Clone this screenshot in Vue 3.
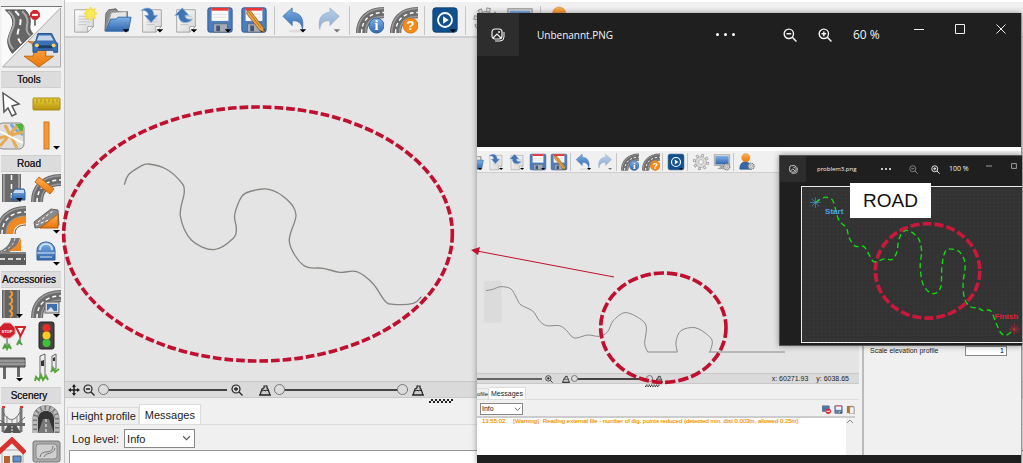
<script setup>
import { ref } from 'vue'

const toolbar = [
  ['doc', 'folder', 'import', 'export', 'save', 'saveas'],
  ['undo', 'redo'],
  ['road-info', 'road-help'],
  ['play'],
  ['gear', 'monitor'],
  ['user'],
]
const innerToolbar = [toolbar[0].slice(1), ...toolbar.slice(1)]

const sections = [
  { title: 'Tools', icons: ['cursor', 'ruler', 'map', 'bar'] },
  { title: 'Road', icons: ['road-car', 'road-cut', 'road-curve', 'ramp', 'junction', 'tunnel-blue'] },
  { title: 'Accessories', icons: ['marking', 'road-sign', 'stop', 'light', 'rail', 'posts'] },
  { title: 'Scenery', icons: ['bridge', 'tunnel', 'house', 'surface'] },
]

const level = ref('Info')
const innerLevel = ref('Info')

// Smooth curve through a list of points (Catmull-Rom converted to Bezier)
function smooth(p) {
  let d = `M${p[0]}`
  for (let i = 0; i < p.length - 1; i++) {
    const a = p[i - 1] || p[i]
    const b = p[i]
    const c = p[i + 1]
    const e = p[i + 2] || c
    d += `C${b[0] + (c[0] - a[0]) / 6},${b[1] + (c[1] - a[1]) / 6} ${c[0] - (e[0] - b[0]) / 6},${c[1] - (e[1] - b[1]) / 6} ${c}`
  }
  return d
}

const mainRoad = smooth([[193, 284], [205, 255], [240, 230], [265, 222], [318, 237], [362, 275], [373, 305], [361, 378], [394, 450], [462, 479], [520, 445], [529, 415], [524, 375], [545, 320], [575, 303], [627, 298], [680, 328], [708, 375], [688, 455], [730, 526], [790, 535], [840, 547], [890, 545], [938, 580], [975, 633], [1000, 643], [1060, 640], [1084, 620]])
const innerRoadA = smooth([[30, 62], [50, 58], [75, 50], [105, 57], [122, 85], [135, 105], [170, 123], [190, 152], [212, 167], [250, 167], [272, 182], [295, 204], [335, 195], [370, 199], [395, 185], [412, 152], [447, 128], [490, 145], [511, 170], [506, 220], [515, 246]])
const innerRoadB = smooth([[604, 246], [600, 215], [615, 182], [657, 173], [695, 195], [709, 215], [702, 245]])
const track = smooth([[140, 157], [152, 148], [170, 141], [190, 150], [200, 180], [207, 205], [218, 220], [232, 233], [240, 262], [258, 287], [283, 288], [298, 310], [314, 334], [345, 325], [368, 327], [382, 305], [390, 262], [412, 240], [445, 262], [456, 300], [452, 350], [462, 405], [490, 429], [513, 410], [517, 345], [527, 303], [545, 296], [570, 305], [586, 340], [580, 400], [585, 445], [602, 468], [625, 472], [640, 480], [662, 480], [678, 515], [692, 545], [710, 553], [733, 535]])
</script>

<template>
  <div class="app">
    <svg class="sprite" aria-hidden="true">
      <defs>
        <linearGradient id="g-blue" x1="0" y1="0" x2="0" y2="1"><stop offset="0" stop-color="#7fb0e6" /><stop offset="1" stop-color="#2f66ad" /></linearGradient>
        <linearGradient id="g-paper" x1="0" y1="0" x2="1" y2="1"><stop offset="0" stop-color="#fff" /><stop offset="1" stop-color="#d4d4d4" /></linearGradient>
        <linearGradient id="g-gold" x1="0" y1="0" x2="0" y2="1"><stop offset="0" stop-color="#e6cf3a" /><stop offset="1" stop-color="#b8930c" /></linearGradient>
        <linearGradient id="g-orange" x1="0" y1="0" x2="0" y2="1"><stop offset="0" stop-color="#ffb053" /><stop offset="1" stop-color="#e8760c" /></linearGradient>

        <symbol id="i-drop" viewBox="0 0 30 30"><path d="M20 25h7l-3.500 3.500z" fill="#000" /></symbol>
        <symbol id="i-sheet" viewBox="0 0 30 30">
          <path d="M5 4h20v18l-6 6H5z" fill="url(#g-paper)" stroke="#a4a4a4" />
          <path d="M25 22h-6v6z" fill="#fff" stroke="#a4a4a4" />
          <path d="M9 11h12M9 14h12M9 17h12M9 20h9" stroke="#c2c2c2" />
        </symbol>
        <symbol id="i-doc" viewBox="0 0 30 30">
          <use href="#i-sheet" />
          <path d="M22 1l1.500 3 3.500-1-1 3.500 3 1.500-3 2 1 3.500-3.500-1-1.500 3-2-3-3 1 1-3.500-3-2 3-1.500-1-3.500 3 1z" fill="#fbe95a" stroke="#f3d93a" />
        </symbol>
        <symbol id="i-folder" viewBox="0 0 30 30">
          <path d="M1 27L2 8l3-4 8-1 2 3h10v8z" fill="#8d8d8d" stroke="#666" />
          <path d="M4 20L8 7l16-1v10z" fill="#e6e6e6" stroke="#aaa" />
          <path d="M2 27l5-13h6l2-2h14l-3 15z" fill="url(#g-blue)" stroke="#3467a8" />
          <use href="#i-drop" />
        </symbol>
        <symbol id="i-import" viewBox="0 0 30 30">
          <use href="#i-sheet" />
          <path d="M3 5c6-5 14-3 14 5h4l-7 8-7-8h4c0-4-4-6-8-5z" fill="#3f74b6" stroke="#8fb2dc" stroke-width=".8" />
          <use href="#i-drop" />
        </symbol>
        <symbol id="i-export" viewBox="0 0 30 30">
          <use href="#i-sheet" />
          <path d="M11 2l7 8h-4c0 4 4 5 8 4-5 6-15 5-15-4H3z" fill="#3f74b6" stroke="#8fb2dc" stroke-width=".8" />
          <use href="#i-drop" />
        </symbol>
        <symbol id="i-save" viewBox="0 0 30 30">
          <rect x="2" y="2" width="26" height="26" rx="2" fill="#4c7dbd" stroke="#2d5490" />
          <path d="M6 3h18v13H6z" fill="#f9f9f9" /><path d="M6 2h18v3H6z" fill="#ee3634" />
          <path d="M8 9h14M8 12h14" stroke="#e0e0e0" />
          <path d="M8 19h15v9H8z" fill="#a5abb3" stroke="#5a6a80" /><path d="M11 21h4v6h-4z" fill="#3d5577" />
          <use href="#i-drop" />
        </symbol>
        <symbol id="i-saveas" viewBox="0 0 30 30">
          <use href="#i-save" />
          <path d="M8 5l3 0 14 18 1 5-5-2L7 8z" fill="#eba544" stroke="#83531a" stroke-width=".8" /><path d="M9 6l14 18" stroke="#b26d1b" />
        </symbol>
        <symbol id="i-undo" viewBox="0 0 30 30">
          <path d="M2 11L12 2v5c9 0 13 7 11 18-1-7-5-10-11-9v5z" fill="url(#g-blue)" stroke="#4271ac" stroke-width=".8" />
          <ellipse cx="16" cy="27" rx="8" ry="1.500" fill="#ddd" /><use href="#i-drop" />
        </symbol>
        <symbol id="i-redo" viewBox="0 0 30 30">
          <g opacity=".5"><path d="M26 11L16 2v5C7 7 3 14 5 25c1-7 5-10 11-9v5z" fill="url(#g-blue)" stroke="#4271ac" stroke-width=".8" /><use href="#i-drop" /></g>
        </symbol>
        <symbol id="i-curve" viewBox="0 0 30 30">
          <path d="M6 29C6 16 14 7 30 7" fill="none" stroke="#666" stroke-width="12" />
          <path d="M6 29C6 16 14 7 30 7" fill="none" stroke="#9a9a9a" stroke-width="10" />
          <path d="M6 29C6 16 14 7 30 7" fill="none" stroke="#6c6c6c" stroke-width="7" />
          <path d="M6 29C6 16 14 7 30 7" fill="none" stroke="#fff" stroke-width="1.500" stroke-dasharray="4 3" />
        </symbol>
        <symbol id="i-road-info" viewBox="0 0 30 30">
          <use href="#i-curve" />
          <circle cx="22" cy="21" r="8" fill="url(#g-blue)" stroke="#3264a3" />
          <text x="22" y="26" font-family="Liberation Serif, serif" font-weight="bold" font-size="15" text-anchor="middle" fill="#fff">i</text>
        </symbol>
        <symbol id="i-road-help" viewBox="0 0 30 30">
          <use href="#i-curve" />
          <circle cx="22" cy="21" r="8" fill="#f78b17" stroke="#de7206" />
          <text x="22" y="26" font-family="Liberation Sans, sans-serif" font-weight="bold" font-size="14" text-anchor="middle" fill="#fff">?</text>
        </symbol>
        <symbol id="i-play" viewBox="0 0 30 30">
          <rect x="2" y="2" width="26" height="26" rx="3" fill="#10508f" stroke="#0b3d70" />
          <circle cx="15" cy="15" r="7.500" fill="none" stroke="#fff" stroke-width="2" /><path d="M13 11v8l6-4z" fill="#fff" />
          <use href="#i-drop" />
        </symbol>
        <symbol id="i-gear" viewBox="0 0 30 30">
          <circle cx="15" cy="15" r="11" fill="none" stroke="#8d8d8d" stroke-width="5" stroke-dasharray="4.300 4.340" />
          <circle cx="15" cy="15" r="11" fill="none" stroke="#e4e4e4" stroke-width="3" stroke-dasharray="2.700 5.940" stroke-dashoffset="-.8" />
          <circle cx="15" cy="15" r="9" fill="#dcdcdc" stroke="#999" /><circle cx="15" cy="15" r="4" fill="#f4f4f4" stroke="#999" />
        </symbol>
        <symbol id="i-monitor" viewBox="0 0 30 30">
          <rect x="2" y="3" width="26" height="18" fill="#ddd" stroke="#888" /><rect x="4" y="5" width="22" height="14" fill="url(#g-blue)" />
          <path d="M11 21h7v4h3v2H8v-2h3z" fill="#aaa" />
          <circle cx="23" cy="23" r="5" fill="#ddd" stroke="#777" stroke-width="2" stroke-dasharray="2 1" /><circle cx="23" cy="23" r="2" fill="#fff" stroke="#777" />
        </symbol>
        <symbol id="i-user" viewBox="0 0 30 30">
          <path d="M3 27c0-9 4-12 9-12s10 3 10 12z" fill="#3568a8" stroke="#274f86" />
          <circle cx="13" cy="8" r="7" fill="url(#g-orange)" stroke="#d8892c" stroke-width=".6" />
          <circle cx="22" cy="22" r="5" fill="#ddd" stroke="#777" stroke-width="2" stroke-dasharray="2 1" /><circle cx="22" cy="22" r="2" fill="#fff" stroke="#777" />
        </symbol>

        <symbol id="i-cursor" viewBox="0 0 30 30"><path d="M7 4l16 11-7 2 4 8-4 2-4-8-4 4z" fill="#fff" stroke="#555" stroke-width="1.500" /></symbol>
        <symbol id="i-ruler" viewBox="0 0 30 30">
          <rect x="2" y="9" width="27" height="12" rx="1" fill="url(#g-gold)" stroke="#a98c14" /><path d="M6 10v4M10 10v3M14 10v4M18 10v3M22 10v4M26 10v3" stroke="#a0820f" stroke-width=".8" />
        </symbol>
        <symbol id="i-map" viewBox="0 0 30 30">
          <rect x="2" y="2" width="26" height="26" rx="5" fill="#dededc" stroke="#888" />
          <path d="M19 3h8v11z" fill="#53b13d" /><path d="M15 3c3 6 8 7 12 11" fill="none" stroke="#78a9e0" stroke-width="3" />
          <path d="M3 17l24-6M9 4l12 23M4 25l17-20" stroke="#e5ab57" stroke-width="3" /><path d="M3 10l24 12" stroke="#fff" stroke-width="2" />
        </symbol>
        <symbol id="i-bar" viewBox="0 0 30 30"><rect x="13" y="1" width="5" height="27" fill="#f6973c" stroke="#d67714" /><path d="M22 25h7l-3.500 3.500z" fill="#000" /></symbol>
        <symbol id="i-straight" viewBox="0 0 30 30">
          <path d="M6 1h19v28H6z" fill="#6a6a6a" /><path d="M8 1v28M23 1v28" stroke="#aaa" stroke-width="1.500" /><path d="M15.500 2v27" stroke="#fff" stroke-width="1.500" stroke-dasharray="5 4" />
        </symbol>
        <symbol id="i-road-car" viewBox="0 0 30 30">
          <use href="#i-straight" /><path d="M16 22l3-6h9l1 3v8H16z" fill="url(#g-blue)" stroke="#345f9b" /><path d="M19 17h9v3h-11z" fill="#c8dbef" /><use href="#i-drop" />
        </symbol>
        <symbol id="i-road-cut" viewBox="0 0 30 30"><use href="#i-curve" /><path d="M4 9l4-5 15 12-4 5z" fill="url(#g-orange)" stroke="#cb690d" /></symbol>
        <symbol id="i-road-curve" viewBox="0 0 30 30">
          <use href="#i-curve" /><path d="M14 29c0-8 5-14 16-14" fill="none" stroke="#f08a20" stroke-width="7" /><path d="M19 29c0-6 4-9 11-9" fill="none" stroke="#7b4a12" />
        </symbol>
        <symbol id="i-ramp" viewBox="0 0 30 30">
          <path d="M3 17L20 4l7 1 1 15-24 3z" fill="#8a8a8a" stroke="#666" /><path d="M7 17L22 6M5 20l21-8" stroke="#fff" stroke-dasharray="3 2" />
          <path d="M9 23L27 9v14z" fill="url(#g-orange)" stroke="#b85d0b" /><path d="M22 25h7l-3.500 3.500z" fill="#000" />
        </symbol>
        <symbol id="i-junction" viewBox="0 0 30 30">
          <path d="M1 15h29v13H1z" fill="#5d5d5d" /><path d="M1 15C10 12 14 7 15 1h9c-2 8-6 12-11 14z" fill="#777" /><path d="M19 1C18 8 13 12 5 15" fill="none" stroke="#ddd" stroke-dasharray="3 2" />
          <path d="M25 1v13H12C19 11 22 7 25 1z" fill="#f08a20" />
          <path d="M4 22h25" stroke="#fff" stroke-width="1.500" stroke-dasharray="5 3" /><path d="M1 16h29" stroke="#aaa" />
        </symbol>
        <symbol id="i-tunnel-blue" viewBox="0 0 30 30">
          <path d="M6 23V14c0-12 18-12 18 0v9z" fill="url(#g-blue)" stroke="#365f98" /><path d="M9 13c0-8 12-8 12 0" fill="none" stroke="#cfe0f3" stroke-width="2" /><path d="M6 16h18M9 20h12" stroke="#d8e6f5" /><path d="M22 25h7l-3.500 3.500z" fill="#000" />
        </symbol>
        <symbol id="i-marking" viewBox="0 0 30 30">
          <path d="M6 1h18v28H6z" fill="#636363" /><path d="M8 1v28M22 1v28" stroke="#aaa" />
          <path d="M14 2c3 2 3 4 0 6 3 2 3 5 0 7 3 2 3 5 0 7 3 2 3 4 0 6" fill="none" stroke="#f29a32" stroke-width="2" /><use href="#i-drop" />
        </symbol>
        <symbol id="i-road-sign" viewBox="0 0 30 30">
          <use href="#i-curve" /><rect x="14" y="13" width="14" height="11" fill="#d5d5d5" stroke="#666" /><rect x="16" y="15" width="10" height="7" fill="#3c6eb0" /><path d="M16 22l4-4 3 4z" fill="#d6e4f3" /><path d="M22 25h7l-3.500 3.500z" fill="#000" />
        </symbol>
        <symbol id="i-stop" viewBox="0 0 30 30">
          <path d="M11 15v13" stroke="#999" stroke-width="2" /><path d="M24 14v9" stroke="#999" stroke-width="2" />
          <path d="M8 2h6l5 5v6l-5 4H8l-5-4V7z" fill="#cf202b" stroke="#e88" />
          <text x="11" y="12" font-family="Liberation Sans, sans-serif" font-weight="bold" font-size="4" text-anchor="middle" fill="#fff">STOP</text>
          <path d="M20 6h9l-4.500 9z" fill="#fff" stroke="#cf202b" stroke-width="2" /><path d="M7 28l2-4 2 4 2-4 2 4M21 24l2-4 3 4" fill="none" stroke="#4fa13d" stroke-width="2" />
        </symbol>
        <symbol id="i-light" viewBox="0 0 30 30">
          <rect x="8" y="1" width="15" height="27" rx="2" fill="#444" stroke="#222" /><circle cx="15.500" cy="7" r="4" fill="#ea2a25" /><circle cx="15.500" cy="14.500" r="4" fill="#ffc81e" /><circle cx="15.500" cy="22" r="4" fill="#3ec234" />
        </symbol>
        <symbol id="i-rail" viewBox="0 0 30 30">
          <path d="M7 12h3v14H7zM21 12h3v12h-3z" fill="#666" /><path d="M3 5h26v9H3z" fill="#777" stroke="#444" /><path d="M3 8h26M3 11h26" stroke="#b8b8b8" /><use href="#i-drop" />
        </symbol>
        <symbol id="i-posts" viewBox="0 0 30 30">
          <path d="M9 3l5-2v24H9z" fill="#eee" stroke="#666" /><path d="M21 3l4-2v15h-4z" fill="#eee" stroke="#666" /><path d="M10 8l3-1v6h-3zM22 5l2-1v4h-2z" fill="#333" />
          <path d="M4 28l1-4 3 3 2-5 2 5 3-4 2 4M20 19l2-4 2 4 4-3" fill="none" stroke="#56a63b" stroke-width="2" />
        </symbol>
        <symbol id="i-bridge" viewBox="0 0 30 30">
          <path d="M7 3v24M25 3v24" stroke="#777" stroke-width="3" /><path d="M1 12c8 10 20 10 28 0" fill="none" stroke="#666" /><path d="M7 7c5 10 12 10 17 0" fill="none" stroke="#666" /><path d="M11 11v8M16 14v6M21 11v8" stroke="#888" />
          <path d="M1 18h28v3H1z" fill="#666" /><path d="M12 20h8l5 8H7z" fill="#555" /><path d="M16 21v7" stroke="#eee" stroke-dasharray="2 1" /><path d="M6 2h3M24 2h3" stroke="#d93734" stroke-width="2" />
        </symbol>
        <symbol id="i-tunnel" viewBox="0 0 30 30">
          <path d="M4 28V14c0-15 22-15 22 0v14" fill="none" stroke="#777" stroke-width="5" /><path d="M4 28V14c0-15 22-15 22 0v14" fill="none" stroke="#bbb" stroke-width="4" stroke-dasharray="3 1.500" />
          <path d="M7 28V14c0-11 16-11 16 0v14z" fill="#333" /><path d="M12 14h6l5 14H7z" fill="#777" /><path d="M15 14v14" stroke="#fff" stroke-dasharray="3 2" />
        </symbol>
        <symbol id="i-house" viewBox="0 0 30 30">
          <path d="M6 13h21v17H6z" fill="#eee" stroke="#aaa" /><path d="M2 16L16 3l13 13" fill="none" stroke="#d9322e" stroke-width="5" /><path d="M8 19h6v11H8z" fill="#b6622e" /><path d="M17 19h8v6h-8z" fill="#5b91d0" stroke="#555" />
        </symbol>
        <symbol id="i-surface" viewBox="0 0 30 30">
          <rect x="2" y="4" width="27" height="21" rx="2" fill="#a9a9a9" stroke="#777" /><rect x="5" y="7" width="21" height="15" rx="3" fill="#cfcfcf" stroke="#8a8a8a" /><path d="M9 20c1-9 13-1 13-11M13 20c1-5 10-2 11-9" fill="none" stroke="#777" />
        </symbol>

        <symbol id="i-move" viewBox="0 0 12 12"><path d="M6 1v10M1 6h10" stroke="#222" stroke-width="1.500" /><path d="M6 0l2 3H4zM6 12l2-3H4zM0 6l3-2v4zM12 6L9 4v4z" fill="#222" /></symbol>
        <symbol id="i-zoom-out" viewBox="0 0 12 12"><circle cx="5" cy="5" r="4" fill="none" stroke="currentColor" stroke-width="1.200" /><path d="M8 8l3.500 3.500M3 5h4" stroke="currentColor" stroke-width="1.300" /></symbol>
        <symbol id="i-zoom-in" viewBox="0 0 12 12"><use href="#i-zoom-out" /><path d="M5 3v4" stroke="currentColor" stroke-width="1.300" /></symbol>
        <symbol id="i-hill" viewBox="0 0 12 12"><path d="M1 11L3 5l2-1V2h3v2l1 1 2 6z" fill="#ccc" stroke="#222" stroke-width="1.200" /><path d="M3 7l2-1 1 1 2-1 1 1M0 11h12" fill="none" stroke="#222" /></symbol>
        <symbol id="i-photos" viewBox="0 0 14 14">
          <rect x="1" y="1" width="10" height="10" rx="3" fill="none" stroke="currentColor" stroke-width="1.200" /><path d="M13 4v5a4 4 0 0 1-4 4H4" fill="none" stroke="currentColor" /><path d="M2 10l4-4 4 4" fill="none" stroke="currentColor" stroke-width="1.200" /><circle cx="8" cy="4" r="1" fill="currentColor" />
        </symbol>
        <symbol id="i-chevron" viewBox="0 0 8 8"><path d="M1 2l3 3 3-3" fill="none" stroke="#555" /></symbol>
        <pattern id="p-grid" width="12" height="12" patternUnits="userSpaceOnUse"><path d="M12 0H0v12" fill="none" stroke="#3b3b3b" stroke-width="2" /></pattern>
      </defs>
    </svg>

    <aside class="sidebar">
      <svg class="logo" viewBox="0 0 61 62" role="img" aria-label="Road editor">
        <path d="M0 0h60v1L1 62H0z" fill="#fafafa" /><path d="M60 1v60H1z" fill="#e2e2e2" stroke="#aaa" />
        <path d="M4 3c20 17-8 24 7 44L32 27c-8-7 3-12-8-24z" fill="#666" stroke="#4b4b4b" />
        <path d="M7 4c17 15-9 24 5 39M21 4c12 12-1 17 8 25" fill="none" stroke="#aaa" stroke-width="2" /><path d="M14 4c14 14-5 19 6 33" fill="none" stroke="#fff" stroke-width="2" stroke-dasharray="6 4" />
        <path d="M34 12v7" stroke="#777" stroke-width="2" /><path d="M32 3h4l3 3v4l-3 3h-4l-3-3V6z" fill="#d52630" /><path d="M31 8h6" stroke="#fff" stroke-width="2" />
        <path d="M27 35c6 2 7 8 5 15h-9l15 11 15-11h-8V37z" fill="url(#g-orange)" stroke="#c0650b" />
        <path d="M37 27h14l4 8 2 2v9h-4v-2H36v2h-4v-9l3-3z" fill="#3a70b4" stroke="#274f88" /><path d="M38 29h12l3 5H36z" fill="#c2d5ea" /><path d="M37 39h15v3H37z" fill="#1f3c69" /><circle cx="36" cy="39" r="2" fill="#fbd35a" /><circle cx="53" cy="39" r="2" fill="#fbd35a" />
      </svg>
      <section v-for="s in sections" :key="s.title" class="section">
        <h2>{{ s.title }}</h2>
        <div class="tools">
          <button v-for="i in s.icons" :key="i" type="button" :aria-label="i"><svg><use :href="'#i-' + i" /></svg></button>
        </div>
      </section>
    </aside>

    <main class="main">
      <div class="toolbar">
        <div v-for="(g, n) in toolbar" :key="n" class="group">
          <button v-for="i in g" :key="i" type="button" :aria-label="i"><svg><use :href="'#i-' + i" /></svg></button>
        </div>
      </div>
      <div class="canvas">
        <svg viewBox="18 -156 1230 1029">
          <path :d="mainRoad" fill="none" stroke="#858580" stroke-width="4" />
          <ellipse cx="594" cy="432" rx="583" ry="381" fill="none" stroke="#c00f2f" stroke-width="11" stroke-dasharray="26 9" />
        </svg>
      </div>
      <div class="viewbar">
        <svg class="ico"><use href="#i-move" /></svg>
        <svg class="ico"><use href="#i-zoom-out" /></svg>
        <input class="zoom" type="range" min="0" max="100" value="0" aria-label="Zoom">
        <svg class="ico"><use href="#i-zoom-in" /></svg>
        <svg class="ico hill"><use href="#i-hill" /></svg>
        <div class="dual">
          <input type="range" min="0" max="100" value="0" aria-label="Lowest height">
          <input type="range" min="0" max="100" value="100" aria-label="Highest height">
        </div>
        <svg class="ico"><use href="#i-hill" /></svg>
      </div>
      <div class="grip"><svg viewBox="0 0 25 5"><path d="M1 4h24" stroke="#222" stroke-width="2" stroke-dasharray="2 2" /><path d="M3 2h22" stroke="#222" stroke-width="2" stroke-dasharray="2 2" /></svg></div>
      <div class="tabs"><button type="button">Height profile</button><button type="button" class="on">Messages</button></div>
      <div class="panel">
        <div class="row">
          <label for="level">Log level:</label>
          <span class="select"><select id="level" v-model="level"><option>Info</option><option>Warning</option></select><svg><use href="#i-chevron" /></svg></span>
        </div>
        <div class="log"></div>
      </div>
    </main>

    <section class="viewer">
      <header class="title">
        <span class="cell"><svg><use href="#i-photos" /></svg></span>
        <span class="name">Unbenannt.PNG</span>
        <button type="button" class="more" aria-label="More"><i></i><i></i><i></i></button>
        <button type="button" class="z1" aria-label="Zoom out"><svg><use href="#i-zoom-out" /></svg></button>
        <button type="button" class="z2" aria-label="Zoom in"><svg><use href="#i-zoom-in" /></svg></button>
        <span class="pct">60 %</span>
        <div class="win">
          <button type="button" aria-label="Minimize"><svg viewBox="0 0 10 10"><path d="M0 5.500h10" /></svg></button>
          <button type="button" aria-label="Maximize"><svg viewBox="0 0 10 10"><path d="M.5.5h9v9h-9z" /></svg></button>
          <button type="button" aria-label="Close"><svg viewBox="0 0 10 10"><path d="M.5.5l9 9M9.500.5l-9 9" /></svg></button>
        </div>
      </header>
      <div class="shot">
        <div class="toolbar">
          <div v-for="(g, n) in innerToolbar" :key="n" class="group">
            <button v-for="i in g" :key="i" type="button" :aria-label="i"><svg><use :href="'#i-' + i" /></svg></button>
          </div>
        </div>
        <div class="split">
          <div class="left">
            <div class="canvas">
              <svg viewBox="3 -291 1143 600">
                <rect x="24" y="32" width="53" height="126" rx="8" fill="#dbdbdb" />
                <path :d="innerRoadA + 'H604' + innerRoadB.replace('M', 'L') + 'M698 246H927'" fill="none" stroke="#8a8a8a" stroke-width="3" />
                <ellipse cx="562" cy="173" rx="188" ry="164" fill="none" stroke="#c00f2f" stroke-width="11" stroke-dasharray="31 9" />
              </svg>
            </div>
            <div class="viewbar">
              <span class="line"></span>
              <svg class="ico"><use href="#i-zoom-in" /></svg>
              <svg class="ico hill"><use href="#i-hill" /></svg>
              <div class="dual">
                <input type="range" min="0" max="100" value="0" aria-label="Lowest height">
                <input type="range" min="0" max="100" value="100" aria-label="Highest height">
              </div>
              <svg class="ico"><use href="#i-hill" /></svg>
              <span class="coords"><span>x: 60271.93</span><span>y: 6038.65</span></span>
            </div>
            <div class="grip"><svg viewBox="0 0 25 5"><path d="M1 4h24" stroke="#222" stroke-width="2" stroke-dasharray="2 2" /><path d="M3 2h22" stroke="#222" stroke-width="2" stroke-dasharray="2 2" /></svg></div>
            <div class="tabs"><button type="button">ofile</button><button type="button" class="on">Messages</button></div>
            <div class="panel">
              <div class="row">
                <span class="select"><select v-model="innerLevel" aria-label="Log level"><option>Info</option><option>Warning</option></select><svg><use href="#i-chevron" /></svg></span>
                <span class="acts">
                  <button type="button" aria-label="Clear"><svg viewBox="0 0 10 10"><path d="M0 1h8v6H0z" fill="#4477b5" stroke="#777" /><circle cx="7" cy="7" r="3" fill="#d9303c" /><path d="M5 7h4" stroke="#fff" /></svg></button>
                  <button type="button" aria-label="Save log"><svg viewBox="0 0 30 30"><use href="#i-save" /></svg></button>
                  <button type="button" aria-label="Copy log"><svg viewBox="0 0 10 10"><path d="M1 1h7v8H1z" fill="#a8742f" /><path d="M4 2h5v8H4z" fill="#f4f4f4" stroke="#888" /></svg></button>
                </span>
              </div>
              <div class="log">
                <p><span class="time">13:55:02</span><span class="kind">[Warning]</span><span>Reading external file - number of dig. points reduced (detected min. dist 0.003m, allowed 0.25m)</span></p>
                <span class="scroll"><svg viewBox="0 0 8 8"><path d="M1 5l3-3 3 3" fill="none" stroke="#888" /></svg></span>
              </div>
            </div>
          </div>
          <div class="props">
            <label for="scale">Scale elevation profile</label>
            <input id="scale" type="text" value="1">
          </div>
        </div>
      </div>
    </section>

    <section class="viewer small">
      <header class="title">
        <span class="cell"><svg><use href="#i-photos" /></svg></span>
        <span class="name">problem3.png</span>
        <button type="button" class="more" aria-label="More"><i></i><i></i><i></i></button>
        <button type="button" class="z1" aria-label="Zoom out"><svg><use href="#i-zoom-out" /></svg></button>
        <button type="button" class="z2" aria-label="Zoom in"><svg><use href="#i-zoom-in" /></svg></button>
        <span class="pct">100 %</span>
        <div class="win">
          <button type="button" aria-label="Minimize"><svg viewBox="0 0 10 10"><path d="M0 5h10" /></svg></button>
          <button type="button" aria-label="Maximize"><svg viewBox="0 0 10 10"><path d="M1 1h8v8H1z" /></svg></button>
        </div>
      </header>
      <div class="photo">
        <svg viewBox="99 111 657 462">
          <rect x="99" y="111" width="657" height="462" fill="#323232" /><rect x="99" y="111" width="657" height="462" fill="url(#p-grid)" />
          <ellipse cx="474" cy="361" rx="156" ry="141" fill="none" stroke="#c8193a" stroke-width="11" stroke-dasharray="27 9" />
          <path :d="track" fill="none" stroke="#0be00b" stroke-width="4" stroke-dasharray="16 10" />
          <path d="M139 141v32M123 157h32M128 146l22 22M150 146l-22 22" stroke="#4a9ad8" stroke-width="2" />
          <path d="M733 519v32M717 535h32M722 524l22 22M744 524l-22 22" stroke="#d8243c" stroke-width="2" />
          <text x="168" y="190" fill="#46a6ee">Start</text><text x="674" y="506" fill="#e0223c">Finish</text>
        </svg>
      </div>
    </section>

    <div class="tag">ROAD</div>
    <svg class="arrow" viewBox="0 0 144 32"><path d="M143 28L6 2" stroke="#c00f2f" /><path d="M0 1l9-3-2 8z" fill="#c00f2f" /></svg>
  </div>
</template>

<style>
body { margin: 0; background: #fff; }
</style>

<style scoped>
* { box-sizing: border-box; }
.app { position: relative; display: grid; grid-template-columns: 65px minmax(0, 1fr); height: 100vh; min-height: 460px; overflow: hidden; font: 11px/16px "Liberation Sans", Arial, sans-serif; color: #222; background: #f0f0f0; }
.sprite { position: absolute; width: 0; height: 0; }
button { padding: 0; border: 0; background: none; font: inherit; color: inherit; }
svg { display: block; }

.sidebar { overflow: hidden; padding: 6px 3px 0 1px; border-right: 1px solid #c2c2c2; background: #f0f0f0; }
.logo { width: 61px; height: 62px; margin-bottom: 3px; border-top: 1px solid #777; }
.section { margin-bottom: 3px; }
.section h2 { height: 17px; margin: 0; border: 1px solid #cfcfcf; border-width: 1px 0; background: #dcdcdc; font-size: 10px; font-weight: 400; line-height: 15px; text-align: center; padding-right: 4px; text-shadow: 0 0 #222; }
.tools { display: grid; grid-template-columns: 30px 30px; column-gap: 5px; margin-left: -5px; }
.tools button { height: 32px; display: flex; align-items: center; }
.tools svg { width: 30px; height: 30px; }

.main { display: flex; flex-direction: column; min-width: 0; }
.toolbar { display: flex; flex: none; height: 38px; padding: 4px 0 0 2px; border-top: 2px solid #fff; border-bottom: 2px solid #cfcfcf; background: #f0f0f0; }
.group { display: flex; }
.group + .group::before { content: ""; width: 1px; height: 29px; margin: 0 3px; background: #c6c6c6; }
.toolbar button { width: 34px; display: flex; justify-content: center; }
.toolbar svg { width: 28px; height: 28px; }
.canvas { flex: 1; min-height: 0; background: #e4e4e4; }
.canvas > svg { position: relative; z-index: 1; width: 410px; height: 343px; overflow: visible; }
.main > .canvas { padding-left: 1px; }
.viewbar { display: flex; flex: none; align-items: center; height: 17px; padding-left: 3px; border: 1px solid #c8c8c8; border-width: 1px 0; background: #dadada; }
.ico { flex: none; width: 12px; height: 12px; margin-right: 3px; }
.hill { margin-left: 13px; }
input[type="range"] { appearance: none; display: block; width: 100%; height: 12px; margin: 0; background: linear-gradient(#444, #444) center / 100% 2px no-repeat; }
input[type="range"]::-webkit-slider-thumb { appearance: none; width: 11px; height: 11px; border: 1px solid #777; border-radius: 50%; background: #dcdcdc; pointer-events: auto; }
.viewbar .zoom { width: 129px; margin-right: 4px; }
.dual { display: grid; width: 134px; margin-right: 4px; }
.dual input { grid-area: 1 / 1; pointer-events: none; }
.dual input + input { background: none; }
.grip { flex: none; height: 7px; }
.grip svg { width: 25px; height: 5px; margin-left: 363px; }
.tabs { display: flex; flex: none; align-items: flex-end; height: 20px; padding-left: 2px; border-bottom: 1px solid #dcdcdc; }
.tabs button { height: 17px; padding: 0 2px 0 3px; border: 1px solid #dcdcdc; border-bottom: 0; white-space: nowrap; }
.tabs .on { height: 20px; padding: 0 5px; background: #fff; }
.panel { display: flex; flex-direction: column; flex: none; padding: 4px 0 0 4px; }
.row { display: flex; align-items: center; gap: 5px; padding-left: 3px; margin-bottom: 2px; }
.select { position: relative; }
.select select { appearance: none; display: block; width: 71px; height: 19px; padding: 0 2px; border: 1px solid #888; border-radius: 0; background: #fff; font: inherit; color: inherit; }
.select svg { position: absolute; right: 4px; top: 5px; width: 9px; height: 9px; pointer-events: none; }
.log { height: 16px; border: 1px solid #999; border-width: 1px 0 0 1px; background: #fff; }

.viewer { position: absolute; z-index: 2; left: 477px; right: 1px; top: 13px; bottom: 0; overflow: hidden; background: #1f1f1f; color: #f4f4f4; border-right: 1px solid #999; box-shadow: 0 0 6px #0006; font-family: "Open Sans", "Noto Sans", sans-serif; }
.title { display: flex; align-items: center; height: 43px; font-size: 10px; }
.cell { display: grid; place-items: center; width: 42px; height: 43px; background: #2d2d2d; }
.cell svg { width: 14px; height: 14px; }
.name { width: 179px; padding-left: 18px; white-space: nowrap; }
.more { display: flex; gap: 5px; width: 85px; padding-left: 18px; }
.more i { width: 3px; height: 3px; border-radius: 50%; background: #fff; }
.z1, .z2 { width: 35px; }
.z1 svg, .z2 svg { width: 14px; height: 14px; }
.pct { font-size: 12px; }
.win { display: flex; gap: 31px; margin: 0 15px 12px auto; }
.win svg { width: 10px; height: 10px; fill: none; stroke: #eee; }

.shot { height: 308px; margin-top: 91px; overflow: hidden; background: #f0f0f0; color: #222; font: 7px/10px "Liberation Sans", Arial, sans-serif; }
.shot .toolbar { height: 26px; padding: 2px 0 0; border-top-width: 4px; margin-left: -13px; border-bottom-width: 1px; }
.shot .group + .group::before { height: 18px; margin: 0 2px 0 1px; }
.shot .toolbar button { width: 21px; }
.shot .toolbar svg { width: 18px; height: 18px; }
.split { display: grid; grid-template-columns: minmax(0, 1fr) 159px; height: 282px; }
.left { display: flex; flex-direction: column; padding-right: 3px; min-width: 0; }
.shot .canvas > svg { width: 381px; height: 200px; }
.shot .viewbar { height: 11px; padding-left: 0; }
.line { width: 65px; height: 2px; margin-right: 3px; background: #666; }
.shot .ico { width: 8px; height: 8px; margin-right: 1px; }
.shot .hill { margin-left: 8px; }
.shot .dual { width: 82px; margin-right: 2px; }
.shot input[type="range"] { height: 8px; }
.shot input[type="range"]::-webkit-slider-thumb { width: 7px; height: 7px; }
.coords { display: flex; gap: 8px; margin: 0 10px 0 auto; }
.shot .grip { height: 3px; }
.shot .grip svg { width: 16px; height: 3px; margin-left: 167px; }
.shot .tabs { height: 13px; padding-left: 0; text-shadow: 0 0 #222; }
.shot .tabs button { height: 11px; padding: 0; border-left: 0; font-size: 6px; }
.shot .tabs .on { height: 12px; padding: 0 2px; font-size: 7px; }
.shot .panel { padding: 3px 4px 0 0; }
.shot .row { margin-bottom: 1px; }
.shot .select select { width: 43px; height: 12px; padding: 0 1px; }
.shot .select svg { right: 2px; top: 3px; width: 7px; height: 7px; }
.acts { display: flex; gap: 3px; margin-left: auto; }
.acts svg { width: 9px; height: 9px; }
.shot .log { display: flex; height: 41px; border: 0; border-top: 2px solid #ccc; overflow: hidden; }
.log p { flex: 1; min-width: 0; margin: 0; padding-left: 5px; color: #f5a21b; font-size: 6px; line-height: 7px; white-space: nowrap; text-shadow: 0 0 #f5a21b; }
.time { margin-right: 8px; }
.kind { margin-right: 4px; }
.scroll { width: 9px; background: #f0f0f0; }
.scroll svg { width: 8px; height: 8px; }
.props { display: flex; align-items: flex-start; justify-content: space-between; padding: 173px 14px 0 6px; border-left: 2px solid #bbb; }
.props input { width: 42px; height: 10px; padding: 0 2px; border: 1px solid #888; text-align: right; font: inherit; }

.small { z-index: 3; left: 779px; top: 155px; bottom: auto; height: 191px; border: 1px solid #555; border-width: 1px 0 1px 1px; }
.small .title { height: 26px; font-size: 6px; }
.small .cell { width: 26px; height: 26px; }
.small .cell svg { width: 9px; height: 9px; }
.small .name { width: 65px; padding-left: 11px; }
.small .more { width: 38px; padding-left: 10px; gap: 2px; }
.small .more i { width: 2px; height: 2px; }
.small .z1, .small .z2 { width: 22px; }
.small .z1 { color: #888; }
.small .z1 svg, .small .z2 svg { width: 9px; height: 9px; }
.small .z2 { width: 18px; }
.small .pct { font-size: 7px; }
.small .win { gap: 19px; margin: 0 5px 6px auto; }
.small .win svg { width: 6px; height: 6px; }
.photo { margin: 4px 0 0 21px; border: 1px solid #eee; border-right: 0; }
.photo svg { width: 100%; height: 155px; }
.photo text { font: bold 24px "Liberation Sans", Arial, sans-serif; }

.tag { position: absolute; z-index: 4; left: 850px; top: 183px; width: 81px; height: 35px; background: #fff; color: #111; font-size: 19px; line-height: 35px; text-align: center; }
.arrow { position: absolute; z-index: 4; left: 471px; top: 249px; width: 144px; height: 32px; overflow: visible; pointer-events: none; }
</style>
